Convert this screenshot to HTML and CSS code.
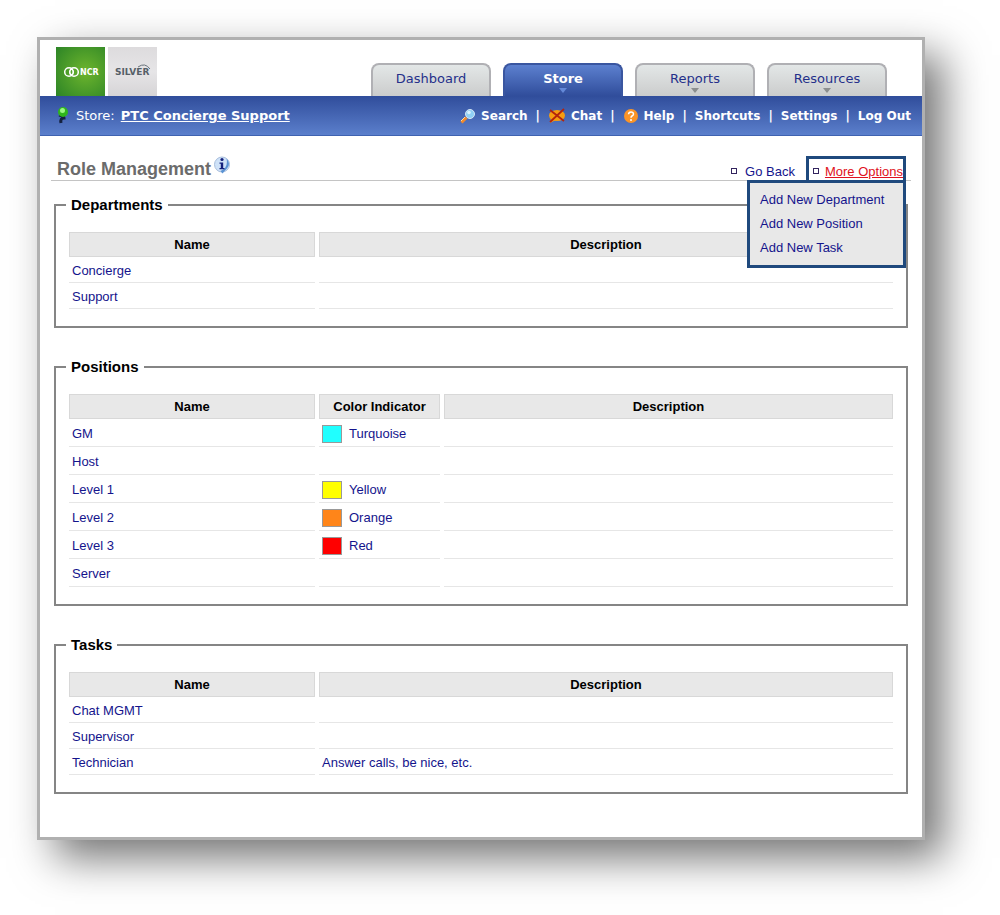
FILE: index.html
```html
<!DOCTYPE html>
<html lang="en">
<head>
  <meta charset="UTF-8">
  <meta name="viewport" content="width=device-width, initial-scale=1.0">
  <title>Role Management</title>
  <link rel="stylesheet" href="styles.css">
</head>
<body>
  <div class="window">
    <header class="header">
      <div class="logo">
        <div class="logo-ncr">
          <svg width="49" height="49" viewBox="0 0 49 49">
            <g fill="none" stroke="#fff" stroke-width="1.5">
              <circle cx="13" cy="25" r="4.3"/>
              <circle cx="18" cy="25" r="4.3"/>
              <path d="M17 22.5a2.6 2.6 0 1 0 0 5M14 22.5a2.6 2.6 0 1 1 0 5" stroke-width="1"/>
            </g>
            <text x="24" y="28" class="ncr-text">NCR</text>
          </svg>
        </div>
        <div class="logo-silver">
          <svg width="49" height="49" viewBox="0 0 49 49">
            <text x="7" y="28" class="silver-text">SILVER</text>
            <path d="M30 20q7-5 12 2" fill="none" stroke="#68727a" stroke-width="1"/>
          </svg>
        </div>
      </div>
      <nav class="tabs">
        <a class="tab" href="#">Dashboard</a>
        <a class="tab active has-menu" href="#">Store</a>
        <a class="tab has-menu" href="#">Reports</a>
        <a class="tab has-menu" href="#">Resources</a>
      </nav>
    </header>

    <div class="bar">
      <div class="store">
        <svg width="14" height="18" viewBox="0 0 14 18">
          <path d="M3 8q5 1 5 3-4 0-3 5" fill="none" stroke="#14213f" stroke-width="3"/>
          <circle cx="7" cy="5" r="5" fill="#2fb51c"/>
          <circle cx="6.500" cy="3.500" r="2.500" fill="#9af784"/>
        </svg>
        <span>Store:</span>
        <a href="#">PTC Concierge Support</a>
      </div>
      <nav class="links">
        <a href="#">
          <svg width="16" height="16" viewBox="0 0 16 16">
            <path d="M1.500 14.500l5-5" stroke="#f08a2c" stroke-width="3"/>
            <path d="M1 13l4-4" stroke="#ffd9a0" stroke-width="1"/>
            <circle cx="10" cy="6" r="4.500" fill="#8fd0f5" stroke="#d5e6f5" stroke-width="1"/>
            <circle cx="9" cy="4.500" r="1.800" fill="#d9f2ff"/>
          </svg>
          Search</a>
        <span>|</span>
        <a href="#">
          <svg width="18" height="16" viewBox="0 0 18 16">
            <path d="M3 10l-1 5 6-3z" fill="#f39a12"/>
            <ellipse cx="9" cy="7.500" rx="8" ry="5.500" fill="#f79c10"/>
            <path d="M2 2l14 11M16 1L2 14" stroke="#b3230d" stroke-width="1.800"/>
          </svg>
          Chat</a>
        <span>|</span>
        <a href="#">
          <svg width="16" height="16" viewBox="0 0 16 16">
            <circle cx="8" cy="8" r="7" fill="#fb9426"/>
            <path d="M5.500 6.200q.2-2.300 2.500-2.300t2.500 2.100q0 1.300-1.500 2-1 .6-1 1.700" fill="none" stroke="#fff" stroke-width="1.500"/>
            <circle cx="8" cy="12" r="1" fill="#fff"/>
          </svg>
          Help</a>
        <span>|</span>
        <a href="#">Shortcuts</a>
        <span>|</span>
        <a href="#">Settings</a>
        <span>|</span>
        <a href="#">Log Out</a>
      </nav>
    </div>

    <main class="content">
      <div class="title-row">
        <h1>Role Management
          <svg width="18" height="18" viewBox="0 0 18 18">
            <circle cx="9" cy="8.500" r="7.500" fill="#cfe2f8" stroke="#a9bfdd" stroke-width="1"/>
            <path d="M13.500 2.500q5.500 6-1.500 12l-2.500 3-2-2.500q8-3 6-12.500z" fill="#5b93d3"/>
            <circle cx="9" cy="3.500" r="1.600" fill="#14217c"/>
            <path d="M6.500 6.500h3.700v5.500h1.300v1.300h-5V12h1.300V7.800H6.500z" fill="#14217c"/>
          </svg>
        </h1>
        <div class="options">
          <a class="option" href="#">Go Back</a>
          <div class="more">
            <a class="option current" href="#">More Options</a>
            <div class="menu">
              <a href="#">Add New Department</a>
              <a href="#">Add New Position</a>
              <a href="#">Add New Task</a>
            </div>
          </div>
        </div>
      </div>

      <fieldset>
        <legend>Departments</legend>
        <table>
          <thead>
            <tr><th class="name">Name</th><th>Description</th></tr>
          </thead>
          <tbody>
            <tr><td><a href="#">Concierge</a></td><td></td></tr>
            <tr><td><a href="#">Support</a></td><td></td></tr>
          </tbody>
        </table>
      </fieldset>

      <fieldset>
        <legend>Positions</legend>
        <table class="positions">
          <thead>
            <tr><th class="name">Name</th><th class="color">Color Indicator</th><th>Description</th></tr>
          </thead>
          <tbody>
            <tr><td><a href="#">GM</a></td><td><a class="indicator" href="#"><i class="swatch turquoise"></i>Turquoise</a></td><td></td></tr>
            <tr><td><a href="#">Host</a></td><td></td><td></td></tr>
            <tr><td><a href="#">Level 1</a></td><td><a class="indicator" href="#"><i class="swatch yellow"></i>Yellow</a></td><td></td></tr>
            <tr><td><a href="#">Level 2</a></td><td><a class="indicator" href="#"><i class="swatch orange"></i>Orange</a></td><td></td></tr>
            <tr><td><a href="#">Level 3</a></td><td><a class="indicator" href="#"><i class="swatch red"></i>Red</a></td><td></td></tr>
            <tr><td><a href="#">Server</a></td><td></td><td></td></tr>
          </tbody>
        </table>
      </fieldset>

      <fieldset>
        <legend>Tasks</legend>
        <table>
          <thead>
            <tr><th class="name">Name</th><th>Description</th></tr>
          </thead>
          <tbody>
            <tr><td><a href="#">Chat MGMT</a></td><td></td></tr>
            <tr><td><a href="#">Supervisor</a></td><td></td></tr>
            <tr><td><a href="#">Technician</a></td><td><a href="#">Answer calls, be nice, etc.</a></td></tr>
          </tbody>
        </table>
      </fieldset>
    </main>
  </div>
</body>
</html>
```
FILE: styles.css
```css
* {
  box-sizing: border-box;
}
body {
  margin: 0;
  padding: 37px 75px 75px 37px;
  background: #fff;
  font-family: "Liberation Sans", Arial, sans-serif;
  font-size: 13px;
  color: #000;
}
a {
  color: #14148c;
  text-decoration: none;
}
svg {
  display: block;
  flex: none;
}
.window {
  background: #fff;
  border: 3px solid #b0b0b0;
  box-shadow: 18px 18px 40px rgba(0, 0, 0, 0.55);
}

/* header */
.header {
  display: flex;
  justify-content: space-between;
  align-items: flex-end;
  height: 56px;
  padding: 0 35px 0 16px;
}
.logo {
  display: flex;
  gap: 3px;
}
.logo-ncr {
  background: radial-gradient(circle at 60% 50%, #6db52d, #2c8426);
}
.logo-silver {
  background: linear-gradient(#dddbdd, #e6e5e7 50%, #d6d4d6);
}
.ncr-text {
  font: bold 8px "DejaVu Sans", Verdana, sans-serif;
  fill: #fff;
}
.silver-text {
  font: bold 9px "DejaVu Sans", Verdana, sans-serif;
  fill: #566068;
}
.tabs {
  display: flex;
  gap: 12px;
}
.tab {
  position: relative;
  width: 120px;
  height: 33px;
  border: 2px solid #b0b0b4;
  border-bottom: 0;
  border-radius: 8px 8px 0 0;
  background: linear-gradient(#e3e7e7, #cbcccc);
  font-family: "DejaVu Sans", Verdana, sans-serif;
  line-height: 27px;
  text-align: center;
  color: #25308a;
}
.tab.active {
  border-color: #3a56a0;
  background: linear-gradient(#5c80cf, #304d9b);
  font-weight: bold;
  color: #fff;
}
.has-menu::after {
  content: "";
  position: absolute;
  left: 50%;
  bottom: 3px;
  margin-left: -4px;
  border: 4px solid transparent;
  border-top: 5px solid #8b8e8e;
  border-bottom: 0;
}
.active.has-menu::after {
  border-top-color: #6489d8;
}

/* blue bar */
.bar {
  display: flex;
  justify-content: space-between;
  align-items: center;
  height: 40px;
  padding: 0 11px 0 16px;
  background: linear-gradient(#304d9b, #5b7fcc);
  border-bottom: 1px solid #3f62b0;
  font-family: "DejaVu Sans", Verdana, sans-serif;
  color: #fff;
}
.bar a {
  color: #fff;
}
.store {
  display: flex;
  align-items: center;
  gap: 6px;
}
.store a {
  font-weight: bold;
  text-decoration: underline;
}
.links {
  display: flex;
  align-items: center;
  gap: 8px;
  font-size: 12px;
  font-weight: bold;
}
.links a {
  display: flex;
  align-items: center;
  gap: 5px;
}

/* content */
.content {
  padding: 20px 11px 13px;
}
.title-row {
  display: flex;
  justify-content: space-between;
  height: 25px;
  padding: 0 5px 0 6px;
  border-bottom: 1px solid #c4c4c4;
}
h1 {
  display: flex;
  gap: 2px;
  margin: 0;
  font-size: 18px;
  line-height: 26px;
  color: #6b6b6b;
}
.options {
  display: flex;
  gap: 11px;
}
.option {
  display: flex;
  gap: 8px;
  line-height: 25px;
  white-space: nowrap;
}
.option::before {
  content: "";
  flex: none;
  width: 4px;
  height: 4px;
  margin-top: 9px;
  border: 1px solid #33245e;
}
.options > .option {
  padding-top: 3px;
}
.more {
  position: relative;
  height: 27px;
  padding-left: 4px;
  border: 3px solid #1f497d;
}
.option.current {
  gap: 6px;
  color: #e01020;
  text-decoration: underline;
}
.menu {
  position: absolute;
  top: 21px;
  right: -3px;
  z-index: 1;
  width: 159px;
  padding: 5px 10px 5px;
  background: #e8e8e8;
  border: 3px solid #1f497d;
}
.menu a {
  display: block;
  line-height: 24px;
  white-space: nowrap;
}

/* lists */
fieldset {
  min-width: 0;
  margin: 15px 3px 30px;
  padding: 18px 9px 17px;
  border: 2px solid #858585;
}
legend {
  margin-left: 1px;
  padding: 0 5px;
  font-size: 15px;
  font-weight: bold;
  line-height: 18px;
}
table {
  width: 100%;
  table-layout: fixed;
  border-collapse: separate;
  border-spacing: 4px 0;
}
th {
  height: 25px;
  padding: 0;
  background: #e8e8e8;
  border: 1px solid #d8d8d8;
}
.name {
  width: 246px;
}
.color {
  width: 121px;
}
td {
  height: 26px;
  padding: 2px 3px 0;
  border-bottom: 1px solid #e6e6e6;
}
.positions td {
  height: 28px;
}
.indicator {
  display: flex;
  align-items: center;
  gap: 7px;
}
.swatch {
  width: 20px;
  height: 18px;
  border: 1px solid #999;
}
.turquoise {
  background: #20ffff;
}
.yellow {
  background: #ffff00;
}
.orange {
  background: #ff8519;
}
.red {
  background: #ff0000;
}
```
